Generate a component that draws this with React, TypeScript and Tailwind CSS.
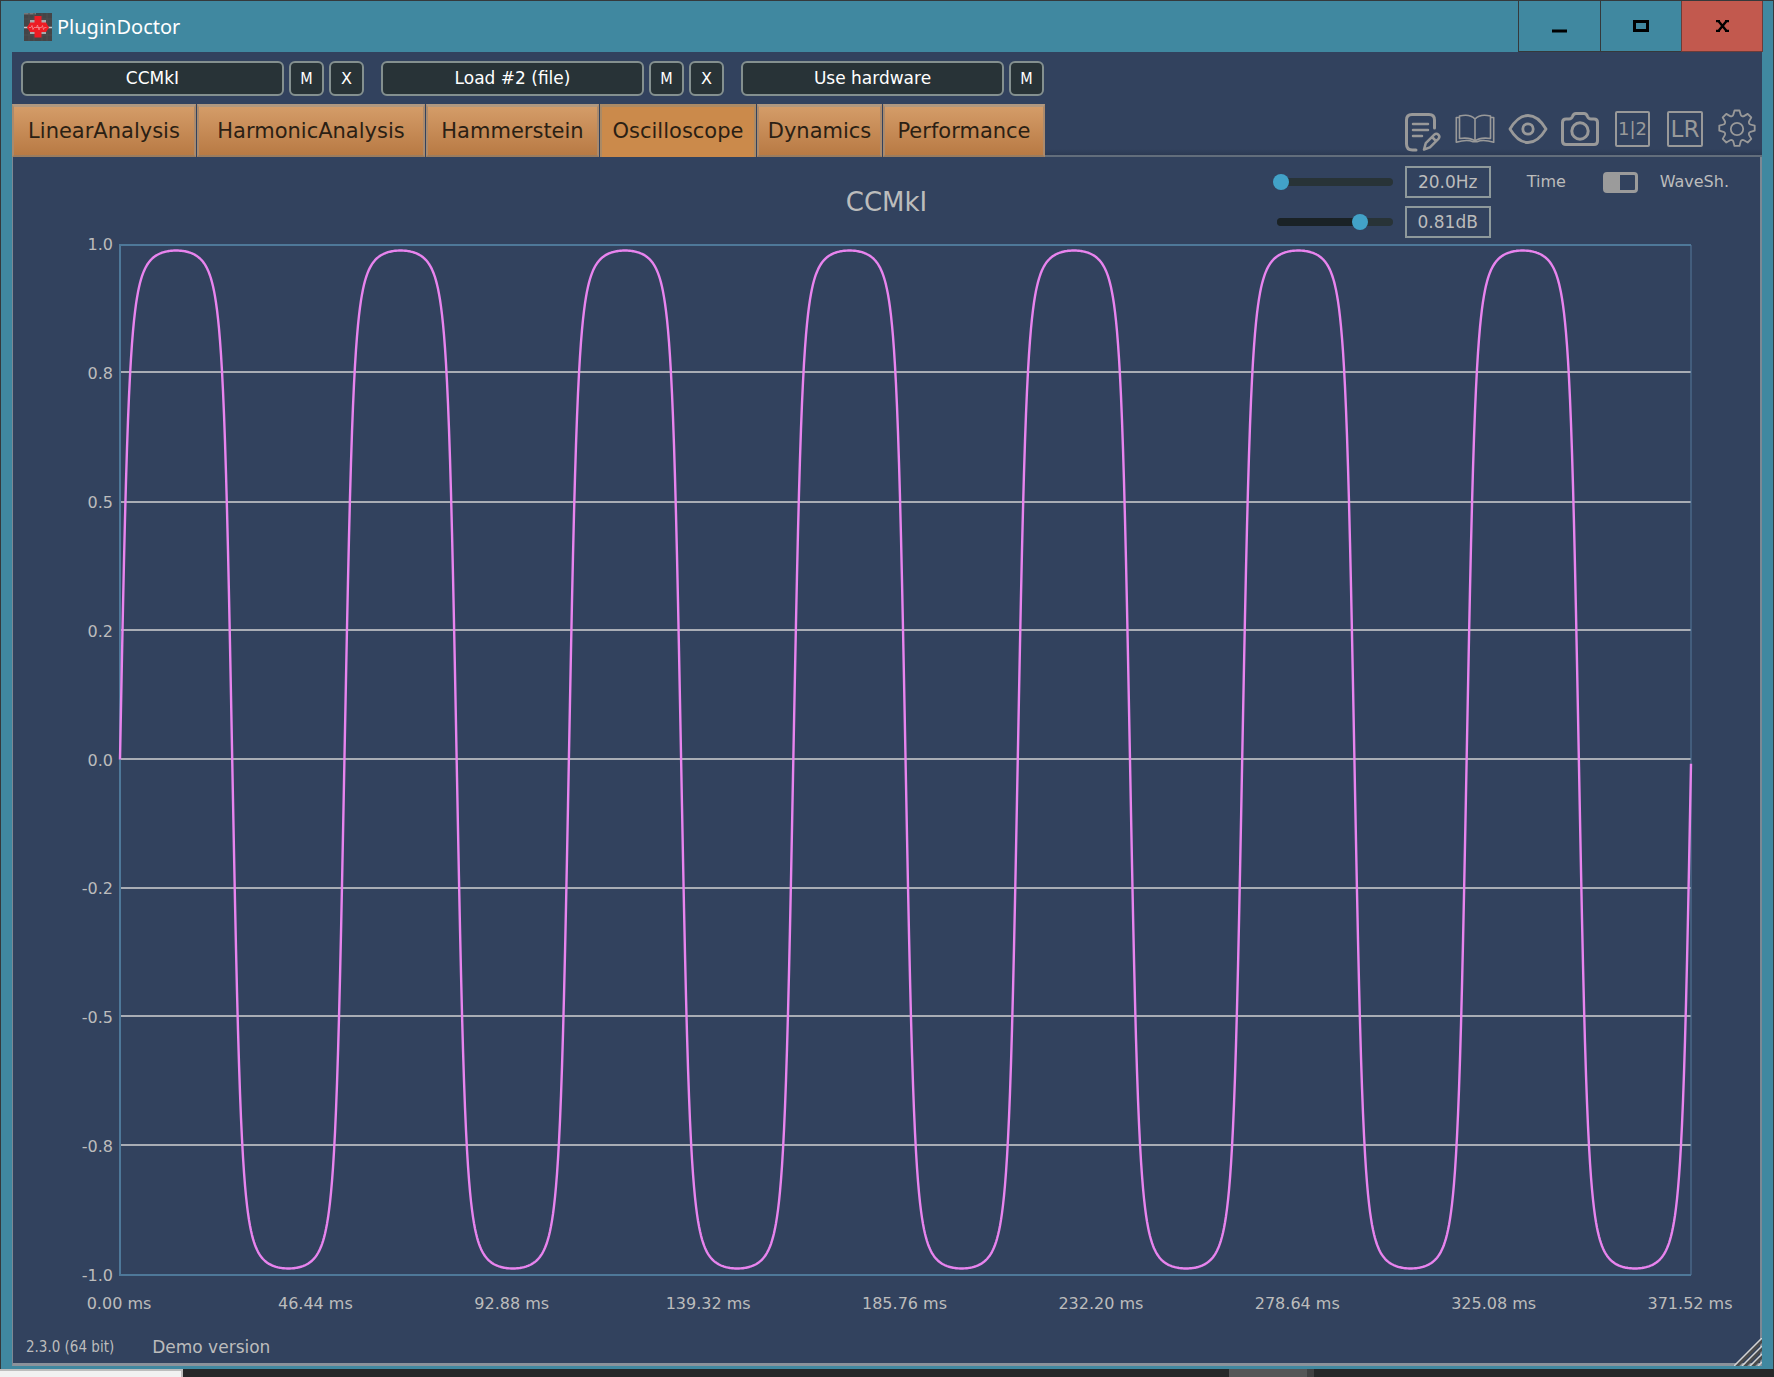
import React, { useState } from "react";

const PLOT_W = 1571;
const PLOT_H = 1030;
const GRID = [127, 257, 385, 514, 643, 771, 900];
const Y_LABELS = ["1.0", "0.8", "0.5", "0.2", "0.0", "-0.2", "-0.5", "-0.8", "-1.0"];
const X_LABELS = [
  "0.00 ms",
  "46.44 ms",
  "92.88 ms",
  "139.32 ms",
  "185.76 ms",
  "232.20 ms",
  "278.64 ms",
  "325.08 ms",
  "371.52 ms",
];

const KNEE = 2.3;
const saturate = (z: number) => z / Math.pow(1 + Math.pow(Math.abs(z), KNEE), 1 / KNEE);

// Soft-clipped sine, scaled to the peak level.
function wavePath() {
  const drive = 3.6;
  const peak = saturate(drive);
  const points: string[] = [];
  for (let x = 0; x <= PLOT_W; x += 1) {
    const v = saturate(drive * Math.sin((2 * Math.PI * x) / 224.44)) / peak;
    points.push(`${x},${(514.5 - v * 509).toFixed(1)}`);
  }
  return "M" + points.join("L");
}

const WAVE = wavePath();

function Logo() {
  return (
    <svg width="28" height="28" viewBox="0 0 28 28" aria-hidden="true">
      <rect width="28" height="28" fill="#444547" />
      <path d="M0 0h12v1.500H0z" fill="#77787a" />
      <path d="M5 0v28M10 0v28M18 0v28M23 0v28M0 6h28M0 22h28" stroke="#4d4e50" strokeWidth="1" />
      <path d="M6 7h16v4H6zM6 18h16v3H6z" fill="#a9aaac" />
      <path d="M0 14.500h28" stroke="#c9cacc" strokeWidth="1.500" />
      <path d="M10.500 3h7v6.500h4.500l3 5-3 4.500h-4.500v5.500h-7V19H6l-3-4.500 3-5h4.500z" fill="#ed1c24" />
      <path d="M5 14.500h2l1-2 1 4 1-2h7.500l1-2 1 4 1-2h2M12.500 14.500l1-2.500 1.500 5 1-2.500" fill="none" stroke="#f59a9c" strokeWidth="0.700" />
    </svg>
  );
}

function NotesIcon() {
  return (
    <svg width="38" height="40" viewBox="0 0 38 40" fill="none" stroke="#999" strokeWidth="3" strokeLinecap="round" strokeLinejoin="round" aria-hidden="true">
      <path d="M12 38H8.500Q2.500 38 2.500 32V8Q2.500 2.500 8 2.500H25Q30.500 2.500 30.500 8V16" />
      <path d="M9 12h15M9 18h15M9 24h9" strokeWidth="2.500" />
      <path d="M20 37.500l1.800-6.300 8.500-8.500a2.900 2.900 0 0 1 4.100 4.100l-8.500 8.500z M28 25l4 4" strokeWidth="2.500" />
    </svg>
  );
}

function BookIcon() {
  return (
    <svg width="40" height="30" viewBox="0 0 40 30" fill="none" stroke="#999" strokeWidth="1.600" strokeLinejoin="round" aria-hidden="true">
      <path d="M20 5Q15-.5 4.500 2V24.500Q15 23 20 27Q25 23 35.500 24.500V2Q25-.5 20 5zV27" />
      <path d="M4.500 3.500H1.300V28.300Q12 25 18 27.800H22Q28 25 38.700 28.300V3.500H35.500" />
    </svg>
  );
}

function EyeIcon() {
  return (
    <svg width="40" height="32" viewBox="0 0 40 32" fill="none" stroke="#999" strokeWidth="2.800" strokeLinejoin="round" aria-hidden="true">
      <path d="M2 16Q10 2.500 20 2.500T38 16Q30 29.500 20 29.500T2 16z" />
      <circle cx="20" cy="16" r="5.200" />
    </svg>
  );
}

function CameraIcon() {
  return (
    <svg width="40" height="36" viewBox="0 0 40 36" fill="none" stroke="#999" strokeWidth="3" strokeLinejoin="round" aria-hidden="true">
      <path d="M6 8H9Q11.500 8 12.500 5.500Q13.500 2.500 16 2.500H24Q26.500 2.500 27.500 5.500Q28.500 8 31 8H34Q37.500 8 37.500 11.500V30Q37.500 33.500 34 33.500H6Q2.500 33.500 2.500 30V11.500Q2.500 8 6 8z" />
      <circle cx="20" cy="20" r="8.200" />
    </svg>
  );
}

function GearIcon() {
  return (
    <svg width="40" height="40" viewBox="0 0 40 40" fill="none" stroke="#999" strokeWidth="1.800" strokeLinejoin="round" aria-hidden="true">
      <path d="M17.500 1.500h5l1.200 4.300q.3 1 1.300 1.400t1.900-.1l3.800-2.200 3.600 3.600-2.200 3.800q-.5.900-.1 1.900t1.400 1.300l4.300 1.200v5l-4.300 1.200q-1 .3-1.400 1.300t.1 1.900l2.200 3.800-3.600 3.600-3.800-2.200q-.9-.5-1.900-.1t-1.300 1.400l-1.200 4.300h-5l-1.200-4.300q-.3-1-1.300-1.400t-1.900.1l-3.800 2.200-3.600-3.600 2.200-3.800q.5-.9.100-1.900t-1.400-1.300l-4.300-1.200v-5l4.300-1.200q1-.3 1.400-1.300t-.1-1.900l-2.200-3.800 3.600-3.600 3.800 2.200q.9.500 1.900.1t1.300-1.400z" />
      <circle cx="20" cy="20" r="6.200" />
    </svg>
  );
}

const SLOT_BTN =
  "flex h-[35px] items-center justify-center rounded-md border-2 border-[#84908f] bg-[#283337] text-white";

function Slot({ name, clearable }: { name: string; clearable?: boolean }) {
  return (
    <div className="flex gap-[5px]">
      <button className={`${SLOT_BTN} w-[263px] text-[17px]`}>{name}</button>
      <button className={`${SLOT_BTN} w-[35px] font-['DejaVu_Sans_Condensed','DejaVu_Sans',sans-serif] text-base`}>M</button>
      {clearable && <button className={`${SLOT_BTN} w-[35px] text-base`}>X</button>}
    </div>
  );
}

const TABS = [
  { name: "LinearAnalysis", width: "w-[184px]" },
  { name: "HarmonicAnalysis", width: "w-[228px]" },
  { name: "Hammerstein", width: "w-[173px]" },
  { name: "Oscilloscope", width: "w-[156px]" },
  { name: "Dynamics", width: "w-[125px]" },
  { name: "Performance", width: "w-[162px]" },
];

function Slider({ label, value, text, onChange }: { label: string; value: number; text: string; onChange: (v: number) => void }) {
  return (
    <div className="flex items-center gap-3">
      <div className="relative h-2 w-[116px] rounded-full bg-[#283337]">
        <div className="h-2 rounded-full bg-[#1a2226]" style={{ width: `${value}%` }} />
        <input
          type="range"
          aria-label={label}
          value={value}
          onChange={(e) => onChange(Number(e.target.value))}
          className="absolute -top-1 -left-1 h-4 w-[124px] appearance-none bg-transparent [&::-webkit-slider-thumb]:h-4 [&::-webkit-slider-thumb]:w-4 [&::-webkit-slider-thumb]:appearance-none [&::-webkit-slider-thumb]:rounded-full [&::-webkit-slider-thumb]:bg-[#42a2c8]"
        />
      </div>
      <input
        type="text"
        aria-label={`${label} value`}
        defaultValue={text}
        className="h-8 w-[86px] border-2 border-[#8e999b] bg-transparent text-center text-[17px] text-[#bcbcbc]"
      />
    </div>
  );
}

export default function App() {
  const [tab, setTab] = useState("Oscilloscope");
  const [freq, setFreq] = useState(0);
  const [level, setLevel] = useState(73);
  const [waveShaper, setWaveShaper] = useState(false);

  return (
    <div className="flex min-h-screen flex-col bg-[#262829] font-['DejaVu_Sans',Verdana,sans-serif]">
      <div className="flex flex-1 flex-col border-x border-t border-[#35393b] bg-[#4088a0] pb-[3px]">
        <header className="flex h-[51px] items-stretch justify-between pl-[23px]">
          <div className="flex items-center gap-[5px] pt-px font-['Noto_Sans','Open_Sans',sans-serif] text-xl text-white">
            <Logo />
            <h1>PluginDoctor</h1>
          </div>
          <div className="mr-[10px] flex">
            <button aria-label="Minimise" className="flex w-[82px] items-center justify-center border-b border-l border-[#35393b]">
              <svg width="16" height="14" aria-hidden="true"><path d="M0 12h15" stroke="#000" strokeWidth="3" /></svg>
            </button>
            <button aria-label="Maximise" className="flex w-[81px] items-center justify-center border-b border-l border-[#35393b]">
              <svg width="16" height="12" aria-hidden="true"><path d="M1.500 1.500h13v9h-13z" fill="none" stroke="#000" strokeWidth="3" /></svg>
            </button>
            <button aria-label="Close" className="flex w-[82px] items-center justify-center border-x border-b border-[#6b3c39] bg-[#c2594e]">
              <svg width="13" height="12" aria-hidden="true"><path d="M0 1h4M9 1h4M0 11h4M9 11h4M2 .5L11 11.500M11 .5L2 11.500" stroke="#000" strokeWidth="2.400" /></svg>
            </button>
          </div>
        </header>

        <main className="mr-[11px] ml-[11px] flex flex-1 flex-col bg-[#32425e] text-[#bcbcbc]">
          <div className="flex gap-[17px] pt-[9px] pl-[9px]">
            <Slot name="CCMkI" clearable />
            <Slot name="Load #2 (file)" clearable />
            <Slot name="Use hardware" />
          </div>

          <div className="mt-2 flex h-[53px] justify-between bg-[linear-gradient(to_top,#626d7b_2px,#2c3a54_2px,transparent_8px)]">
            <nav role="tablist" className="flex gap-px bg-[#32425e]">
              {TABS.map((t) => (
                <button
                  key={t.name}
                  role="tab"
                  aria-selected={tab === t.name}
                  onClick={() => setTab(t.name)}
                  className={`flex items-center justify-center border-x-2 border-t-[3px] text-[21px] text-[#2b1f14] ${t.width} ${
                    tab === t.name
                      ? "border-[#ab8a65] bg-[#cb8a4b]"
                      : "border-b-2 border-x-[#ab8a6c] border-t-[#b09880] border-b-[#9b7c5e] bg-linear-to-b from-[#d49c68] to-[#b87a44] pt-[2px]"
                  }`}
                >
                  {t.name}
                </button>
              ))}
            </nav>
            <div className="flex items-center gap-3 pr-[5px] pb-1 text-[#999]">
              <button aria-label="Notes" className="flex w-10 justify-center pt-[6px]"><NotesIcon /></button>
              <button aria-label="Manual" className="flex w-10 justify-center"><BookIcon /></button>
              <button aria-label="View" className="flex w-[41px] justify-center"><EyeIcon /></button>
              <button aria-label="Snapshot" className="flex w-10 justify-center"><CameraIcon /></button>
              <button aria-label="Channels" className="flex w-[41px] justify-center">
                <span className="flex h-9 w-[35px] items-center justify-center rounded-xs border-2 border-[#999] pt-px text-lg">1|2</span>
              </button>
              <button aria-label="Left and right" className="flex w-10 justify-center">
                <span className="flex h-9 w-9 items-center justify-center rounded-xs border-2 border-[#999] pt-[2px] text-[23px]">LR</span>
              </button>
              <button aria-label="Settings" className="flex w-10 justify-center"><GearIcon /></button>
            </div>
          </div>

          <section className="flex flex-1 flex-col border-r-2 border-b-[3px] border-l border-r-[#7d8894] border-b-[#8b929b] border-l-[#7d8894]">
            <div className="grid h-[88px] grid-cols-[1fr_auto_1fr]">
              <div />
              <h2 className="pt-[27px] text-[26px] leading-9">CCMkI</h2>
              <div className="flex justify-end gap-9 pt-[9px] pr-[31px]">
                <div className="flex flex-col gap-2">
                  <Slider label="Frequency" value={freq} text="20.0Hz" onChange={setFreq} />
                  <Slider label="Level" value={level} text="0.81dB" onChange={setLevel} />
                </div>
                <label className="flex h-8 items-center text-base">
                  <span className="w-[76px]">Time</span>
                  <input
                    type="checkbox"
                    role="switch"
                    checked={waveShaper}
                    onChange={(e) => setWaveShaper(e.target.checked)}
                    className="mr-[22px] h-[21px] w-[35px] appearance-none rounded-sm border-[3px] border-[#9b9b9b] bg-linear-to-r from-[#9b9b9b] from-50% to-transparent to-50% checked:bg-linear-to-l"
                  />
                  <span>WaveSh.</span>
                </label>
              </div>
            </div>

            <div className="flex flex-1">
              <div className="flex w-[107px] flex-col justify-between pr-[7px] text-right text-base">
                {Y_LABELS.map((l) => (
                  <span key={l} className="flex h-0 items-center justify-end">{l}</span>
                ))}
              </div>
              <svg
                className="mr-[69px] h-full min-h-[300px] min-w-0 flex-1 overflow-visible"
                viewBox={`0 0 ${PLOT_W} ${PLOT_H}`}
                preserveAspectRatio="none"
                role="img"
                aria-label="Output waveform over time"
              >
                {GRID.map((y) => (
                  <path key={y} d={`M0 ${y}H${PLOT_W}`} stroke="#a9adb5" strokeWidth="2" />
                ))}
                <path d={`M${PLOT_W} ${PLOT_H}V0`} stroke="#54789b" strokeWidth="1" />
                <path d={`M${PLOT_W} 0H0V${PLOT_H}H${PLOT_W}`} fill="none" stroke="#4e7899" strokeWidth="2" />
                <path d={WAVE} fill="none" stroke="#e884ee" strokeWidth="2.400" strokeLinejoin="round" />
              </svg>
            </div>

            <div className="mr-[70px] ml-[106px] flex h-[54px] items-center justify-between pt-[2px] text-base">
              {X_LABELS.map((l) => (
                <span key={l} className="flex w-0 justify-center whitespace-nowrap">{l}</span>
              ))}
            </div>

            <footer className="flex h-[33px] items-end justify-between pl-[13px] text-[17px]">
              <div className="flex h-[33px] items-center gap-[38px] pt-[2px]">
                <span className="font-['DejaVu_Sans_Condensed','DejaVu_Sans',sans-serif] text-[15px]">2.3.0 (64 bit)</span>
                <span>Demo version</span>
              </div>
              <svg width="28" height="28" viewBox="0 0 28 28" className="-mr-[2px] -mb-[3px]" aria-hidden="true">
                <path d="M2 29L29 2M10 29L29 10M18 29L29 18" stroke="#4a4a4a" strokeWidth="3" />
                <path d="M0 28L28 0M8 28L28 8M16 28L28 16M24 28L28 24" stroke="#d4d4d4" strokeWidth="1.500" />
              </svg>
            </footer>
          </section>
        </main>
      </div>

      <div className="flex h-2">
        <div className="w-[183px] border-t-2 border-r-2 border-[#bdbdbd] bg-[#f1f1f1]" />
        <div className="flex-1" />
        <div className="mr-[460px] w-[85px] border-r-[7px] border-[#404142] bg-[#555657]" />
      </div>
    </div>
  );
}
